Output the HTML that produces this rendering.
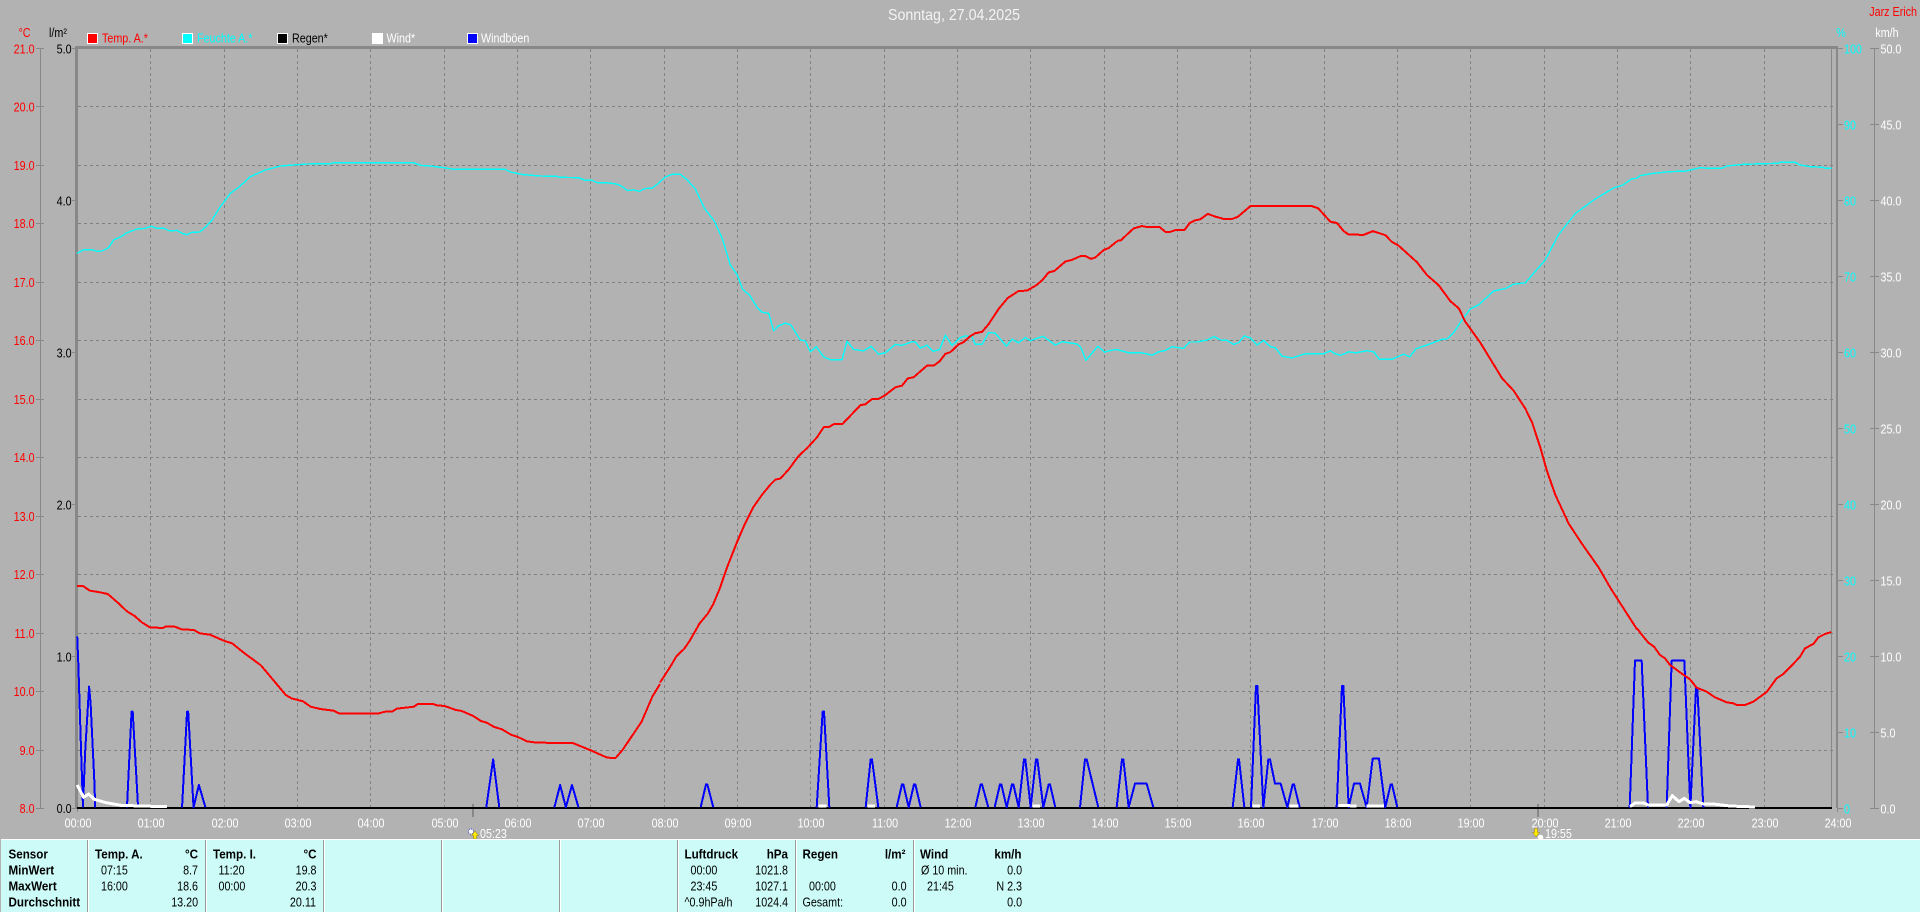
<!DOCTYPE html>
<html lang="de">
<head>
<meta charset="utf-8">
<title>Sonntag, 27.04.2025</title>
<style>
html,body{margin:0;padding:0;background:#b2b2b2;width:1920px;height:912px;overflow:hidden}
svg{display:block}
text{font-family:"Liberation Sans",sans-serif;font-size:12.5px;transform-box:fill-box;transform:scaleX(.86)}
.l{transform-origin:0% 50%}
.e{text-anchor:end;transform-origin:100% 50%}
.m{text-anchor:middle;transform-origin:50% 50%}
.b{font-weight:bold;transform:scaleX(.93)}
.red{fill:#f00}.cy{fill:#0ff}.wh{fill:#fff}.bk{fill:#000}
polyline,path.c{fill:none;vector-effect:non-scaling-stroke;shape-rendering:crispEdges;stroke-linejoin:round}
.R polyline{stroke:#f00;stroke-width:2}
.C polyline{stroke:#0ff;stroke-width:1.4}
.B polyline{stroke:#00f;stroke-width:2}
.W polyline{stroke:#fff;stroke-width:3}
</style>
</head>
<body>
<svg width="1920" height="912" viewBox="0 0 1920 912" xmlns="http://www.w3.org/2000/svg">
<rect width="1920" height="912" fill="#b2b2b2"/>

<!-- grid -->
<path shape-rendering="crispEdges" fill="none" stroke="#808080" stroke-width="1" stroke-dasharray="3 3" d="M78 106.5H1836M78 165.5H1836M78 223.5H1836M78 282.5H1836M78 340.5H1836M78 399.5H1836M78 457.5H1836M78 516.5H1836M78 574.5H1836M78 633.5H1836M78 691.5H1836M78 750.5H1836"/>
<path shape-rendering="crispEdges" fill="none" stroke="#808080" stroke-width="1" stroke-dasharray="3 3" d="M150.5 49V807M224.5 49V807M297.5 49V807M370.5 49V807M444.5 49V807M517.5 49V807M590.5 49V807M664.5 49V807M737.5 49V807M810.5 49V807M884.5 49V807M957.5 49V807M1030.5 49V807M1104.5 49V807M1177.5 49V807M1250.5 49V807M1324.5 49V807M1397.5 49V807M1470.5 49V807M1544.5 49V807M1617.5 49V807M1690.5 49V807M1764.5 49V807"/>

<!-- frame -->
<g fill="#888" shape-rendering="crispEdges">
<rect x="76" y="46" width="1762" height="3"/>
<rect x="75" y="46" width="3" height="762"/>
<rect x="1836" y="46" width="2" height="762"/>
<rect x="1831" y="48" width="1" height="760"/>
<!-- left temp axis -->
<rect x="40" y="48" width="1" height="760"/>
<rect x="36" y="48" width="8" height="1"/><rect x="36" y="106" width="8" height="1"/><rect x="36" y="165" width="8" height="1"/><rect x="36" y="223" width="8" height="1"/><rect x="36" y="282" width="8" height="1"/><rect x="36" y="340" width="8" height="1"/><rect x="36" y="399" width="8" height="1"/><rect x="36" y="457" width="8" height="1"/><rect x="36" y="516" width="8" height="1"/><rect x="36" y="574" width="8" height="1"/><rect x="36" y="633" width="8" height="1"/><rect x="36" y="691" width="8" height="1"/><rect x="36" y="750" width="8" height="1"/><rect x="36" y="808" width="8" height="1"/>
<!-- l/m2 ticks -->
<rect x="72" y="48" width="5" height="1"/><rect x="72" y="200" width="5" height="1"/><rect x="72" y="352" width="5" height="1"/><rect x="72" y="504" width="5" height="1"/><rect x="72" y="656" width="5" height="1"/><rect x="72" y="808" width="5" height="1"/>
<!-- right axes -->
<rect x="1874" y="48" width="1" height="760"/>
<rect x="1838" y="48" width="5" height="1"/><rect x="1838" y="124" width="5" height="1"/><rect x="1838" y="200" width="5" height="1"/><rect x="1838" y="276" width="5" height="1"/><rect x="1838" y="352" width="5" height="1"/><rect x="1838" y="428" width="5" height="1"/><rect x="1838" y="504" width="5" height="1"/><rect x="1838" y="580" width="5" height="1"/><rect x="1838" y="656" width="5" height="1"/><rect x="1838" y="732" width="5" height="1"/><rect x="1838" y="808" width="5" height="1"/>
<rect x="1870" y="48" width="9" height="1"/><rect x="1870" y="124" width="9" height="1"/><rect x="1870" y="200" width="9" height="1"/><rect x="1870" y="276" width="9" height="1"/><rect x="1870" y="352" width="9" height="1"/><rect x="1870" y="428" width="9" height="1"/><rect x="1870" y="504" width="9" height="1"/><rect x="1870" y="580" width="9" height="1"/><rect x="1870" y="656" width="9" height="1"/><rect x="1870" y="732" width="9" height="1"/><rect x="1870" y="808" width="9" height="1"/>
<!-- time ticks -->
<rect x="77" y="808" width="1" height="4"/><rect x="1837" y="808" width="1" height="4"/>
<!-- sun ticks -->
<rect x="472" y="804" width="2" height="13"/><rect x="1537" y="804" width="2" height="13"/>
</g>

<!-- baseline -->
<rect x="77" y="807" width="1755" height="2" fill="#000" shape-rendering="crispEdges"/>

<!-- humidity -->
<g class="C">
<g transform="translate(77,150) scale(.33333)"><polyline points="0,310 20,299 45,299 60,304 75,303 95,293 110,270 135,258 150,248 180,237 205,235 222,229 240,235 262,235 278,243 300,241 315,250 330,254 345,247 368,246 385,232 405,210 430,170 460,130 490,108 520,80 565,60 610,48 650,45 690,42 760,41 770,38 1010,38 1030,46 1060,48 1100,53 1130,58 1285,58 1300,66 1340,74 1390,78 1440,79 1450,82 1505,83 1525,91 1545,91 1560,98"/></g>
<g transform="translate(597,150) scale(.33333,.33806)"><polyline points="0,97 30,97 55,100 70,105 92,120 110,118 127,122 145,114 165,113 180,102 205,80 225,72 250,72 270,88 295,115 322,172 352,210 375,260 400,340 420,368 437,412 458,430 480,465 495,480 515,483 530,535 545,520 565,512 582,518 610,562 625,565 640,597 658,582 680,612 700,620 735,620 750,566 770,590 800,594 822,581 845,604 865,600 895,575 915,578 945,567 955,568 970,586 990,577 1008,596 1028,590 1045,548 1065,578 1090,555 1105,550 1125,552 1135,575 1155,575 1175,540 1195,542 1228,580 1245,560 1265,570 1285,555 1300,564 1338,551 1375,577 1395,567 1440,574 1452,585 1467,622 1503,580 1522,598 1545,592 1560,590"/></g>
<g transform="translate(1117,150) scale(.33333,.33806)"><polyline points="0,590 35,600 75,600 105,607 125,597 145,593 165,582 200,587 218,568 240,568 270,562 292,552 310,562 330,563 350,575 365,570 382,550 400,556 420,577 440,563 460,582 475,585 495,610 525,615 565,603 620,603 640,594 655,603 672,607 695,597 715,600 750,594 770,597 787,619 825,619 860,604 878,612 897,588 935,575 975,560 990,559 1010,540 1030,510 1060,470 1085,458 1130,417 1165,410 1190,397 1225,393 1285,325 1325,250 1375,188 1430,148 1490,112 1515,105 1545,85 1560,84"/></g>
<g transform="translate(1500,0) scale(.33333)"><polyline points="411,535 420,527 460,520 510,515 560,513 600,503 625,505 665,505 680,498 730,493 790,491 835,490 840,487 885,487 900,495 930,500 970,502 975,505 994,505"/></g>
</g>

<!-- gusts -->
<g class="B">
<g transform="translate(60,570) scale(.38265,.33333)">
<polyline points="45,200 48,285 55,540 60,710 66,540 76,350 80,400 90,640 92,712"/>
<polyline points="175,712 187,425 190,425 204,712"/>
<polyline points="319,712 332,425 335,425 349,712 363,645 380,712"/>
<polyline points="1114,712 1132,568 1148,712"/>
<polyline points="1292,712 1307,645 1322,712 1338,645 1355,712"/>
</g>
<g transform="translate(640,680) scale(.33333)">
<polyline points="182,382 198,313 202,313 220,382"/>
<polyline points="530,382 548,95 552,95 568,382"/>
<polyline points="677,382 692,238 696,238 715,382"/>
<polyline points="770,382 786,313 790,313 806,382 822,313 826,313 842,382"/>
<polyline points="1006,382 1022,313 1026,313 1045,382"/>
<polyline points="1064,382 1080,313 1084,313 1100,382 1116,313 1120,313 1136,382 1152,238 1156,238 1172,382 1188,238 1192,238 1210,382 1226,313 1230,313 1246,382"/>
<polyline points="1320,382 1335,238 1340,238 1375,382"/>
<polyline points="1430,382 1446,238 1450,238 1466,382 1485,311 1520,311 1540,382"/>
</g>
<g transform="translate(1160,680) scale(.33333)">
<polyline points="218,382 234,238 237,238 253,382"/>
<polyline points="273,382 288,18 292,18 310,382 325,238 330,238 345,311 362,311 382,382 398,313 402,313 419,382"/>
<polyline points="530,382 546,18 550,18 566,382 582,311 600,311 620,382 638,236 657,236 676,382 692,313 696,313 712,382"/>
</g>
<g transform="translate(1500,620) scale(.33333)">
<polyline points="389,563 405,122 425,122 444,563"/>
<polyline points="500,563 515,122 553,122 571,563 588,205 592,205 610,563"/>
</g>
</g>

<!-- wind -->
<g class="W">
<g transform="translate(60,570) scale(.38265,.33333)"><polyline points="45,645 62,682 75,672 90,688 120,698 160,706 210,708 280,710"/></g>
<g transform="translate(1500,620) scale(.33333)"><polyline points="390,560 405,549 430,549 445,555 500,555 517,527 537,545 553,535 570,548 588,545 610,552 640,552 690,558 765,561"/></g>
<g transform="translate(640,680) scale(.33333)"><polyline points="535,378 560,378"/><polyline points="682,378 705,378"/><polyline points="1178,378 1200,378"/></g>
<g transform="translate(1160,680) scale(.33333)"><polyline points="278,378 300,378"/><polyline points="388,378 415,378"/><polyline points="535,376 590,378"/><polyline points="620,378 672,378"/></g>
</g>

<!-- temperature -->
<g class="R">
<g transform="translate(60,570) scale(.38265,.33333)"><polyline points="45,48 60,48 78,62 100,66 125,72 150,97 175,124 195,138 215,158 235,172 268,174 275,170 300,170 318,178 350,180 365,190 392,194 430,213 450,220 480,248 525,286 550,320 590,375 605,385 635,394 655,410 680,417 715,422 730,431 830,431 850,425 868,425 880,416 925,410 935,402 975,402 985,406 1005,408 1035,420 1050,423 1080,438 1100,453 1115,458 1135,471 1155,478 1180,495 1195,500 1220,514 1245,518 1340,519 1385,540 1430,563 1452,564 1470,540 1520,455 1548,380 1568,342"/></g>
<g transform="translate(597,150) scale(.33333,.33806)"><polyline points="189,1575 198,1562 222,1525 238,1498 262,1475 278,1452 308,1400 332,1372 348,1345 368,1298 390,1235 420,1160 445,1103 470,1055 495,1020 520,990 535,975 550,972 575,945 605,905 630,882 660,850 680,820 695,820 710,811 736,811 790,755 805,752 825,737 845,736 862,727 895,702 915,697 932,676 950,672 990,638 1010,638 1028,625 1045,603 1060,598 1085,575 1100,568 1118,552 1135,542 1155,538 1175,515 1205,470 1232,438 1265,417 1290,416 1318,400 1335,386 1355,362 1372,358 1405,330 1425,325 1450,314 1465,314 1482,322 1495,318 1520,296 1535,290 1560,270"/></g>
<g transform="translate(1117,150) scale(.33333,.33806)"><polyline points="0,269 12,267 30,250 50,232 75,225 90,228 128,228 145,242 160,242 175,237 203,236 218,216 235,208 250,205 272,189 295,197 320,204 345,204 362,198 400,166 585,166 603,172 640,212 660,216 680,240 695,250 740,251 768,240 805,252 825,272 845,283 900,332 930,370 965,400 1000,447 1025,468 1045,508 1090,570 1155,675 1190,712 1225,765 1245,805 1270,880 1290,950 1315,1020 1355,1105 1395,1165 1445,1235 1480,1295 1560,1418"/></g>
<g transform="translate(1500,260) scale(.33333)"><polyline points="411,1105 430,1130 445,1148 462,1160 480,1185 495,1195 510,1215 540,1237 570,1258"/></g>
<g transform="translate(1500,620) scale(.33333)"><polyline points="570,178 590,203 620,215 645,232 680,247 700,250 710,255 735,255 760,245 800,216 830,175 850,162 875,137 900,110 915,85 940,72 955,52 975,42 994,36"/></g>
</g>

<!-- title -->
<text x="954" y="20" class="m wh" style="font-size:16px;transform:scaleX(.89);opacity:.85">Sonntag, 27.04.2025</text>
<text x="1917" y="16" class="e red">Jarz Erich</text>

<!-- headers -->
<text x="24.5" y="37" class="m red">°C</text>
<text x="58" y="37" class="m bk">l/m²</text>
<text x="1841" y="37" class="m cy">%</text>
<text x="1887" y="37" class="m wh">km/h</text>

<!-- legend -->
<g shape-rendering="crispEdges" stroke="#fff" stroke-width="1">
<rect x="87.5" y="33.5" width="10" height="10" fill="#f00"/>
<rect x="182.5" y="33.5" width="10" height="10" fill="#0ff"/>
<rect x="277.5" y="33.5" width="10" height="10" fill="#000"/>
<rect x="372.5" y="33.5" width="10" height="10" fill="#fff"/>
<rect x="467.5" y="33.5" width="10" height="10" fill="#00f"/>
</g>
<text x="102" y="42.5" class="l red">Temp. A.*</text>
<text x="197" y="42.5" class="l cy">Feuchte A.*</text>
<text x="292" y="42.5" class="l bk">Regen*</text>
<text x="386.5" y="42.5" class="l wh">Wind*</text>
<text x="481" y="42.5" class="l wh">Windböen</text>

<!-- temp axis labels -->
<g class="red">
<text x="34.5" y="53.5" class="e">21.0</text>
<text x="34.5" y="111.5" class="e">20.0</text>
<text x="34.5" y="170" class="e">19.0</text>
<text x="34.5" y="228" class="e">18.0</text>
<text x="34.5" y="287" class="e">17.0</text>
<text x="34.5" y="345" class="e">16.0</text>
<text x="34.5" y="404" class="e">15.0</text>
<text x="34.5" y="462" class="e">14.0</text>
<text x="34.5" y="521" class="e">13.0</text>
<text x="34.5" y="579" class="e">12.0</text>
<text x="34.5" y="638" class="e">11.0</text>
<text x="34.5" y="696" class="e">10.0</text>
<text x="34.5" y="755" class="e">9.0</text>
<text x="34.5" y="813" class="e">8.0</text>
</g>
<g class="bk">
<text x="71.5" y="53.5" class="e">5.0</text>
<text x="71.5" y="205.5" class="e">4.0</text>
<text x="71.5" y="357.5" class="e">3.0</text>
<text x="71.5" y="509.5" class="e">2.0</text>
<text x="71.5" y="661.5" class="e">1.0</text>
<text x="71.5" y="813" class="e">0.0</text>
</g>
<g class="cy">
<text x="1844" y="53.5" class="l">100</text>
<text x="1844" y="129.5" class="l">90</text>
<text x="1844" y="205.5" class="l">80</text>
<text x="1844" y="281.5" class="l">70</text>
<text x="1844" y="357.5" class="l">60</text>
<text x="1844" y="433.5" class="l">50</text>
<text x="1844" y="509.5" class="l">40</text>
<text x="1844" y="585.5" class="l">30</text>
<text x="1844" y="661.5" class="l">20</text>
<text x="1844" y="737.5" class="l">10</text>
<text x="1844" y="813.5" class="l">0</text>
</g>
<g class="wh">
<text x="1880.5" y="53.5" class="l">50.0</text>
<text x="1880.5" y="129.5" class="l">45.0</text>
<text x="1880.5" y="205.5" class="l">40.0</text>
<text x="1880.5" y="281.5" class="l">35.0</text>
<text x="1880.5" y="357.5" class="l">30.0</text>
<text x="1880.5" y="433.5" class="l">25.0</text>
<text x="1880.5" y="509.5" class="l">20.0</text>
<text x="1880.5" y="585.5" class="l">15.0</text>
<text x="1880.5" y="661.5" class="l">10.0</text>
<text x="1880.5" y="737.5" class="l">5.0</text>
<text x="1880.5" y="813.5" class="l">0.0</text>
</g>

<!-- time labels -->
<g class="wh">
<text x="78" y="827.5" class="m">00:00</text>
<text x="151" y="827.5" class="m">01:00</text>
<text x="225" y="827.5" class="m">02:00</text>
<text x="298" y="827.5" class="m">03:00</text>
<text x="371" y="827.5" class="m">04:00</text>
<text x="445" y="827.5" class="m">05:00</text>
<text x="518" y="827.5" class="m">06:00</text>
<text x="591" y="827.5" class="m">07:00</text>
<text x="665" y="827.5" class="m">08:00</text>
<text x="738" y="827.5" class="m">09:00</text>
<text x="811" y="827.5" class="m">10:00</text>
<text x="885" y="827.5" class="m">11:00</text>
<text x="958" y="827.5" class="m">12:00</text>
<text x="1031" y="827.5" class="m">13:00</text>
<text x="1105" y="827.5" class="m">14:00</text>
<text x="1178" y="827.5" class="m">15:00</text>
<text x="1251" y="827.5" class="m">16:00</text>
<text x="1325" y="827.5" class="m">17:00</text>
<text x="1398" y="827.5" class="m">18:00</text>
<text x="1471" y="827.5" class="m">19:00</text>
<text x="1545" y="827.5" class="m">20:00</text>
<text x="1618" y="827.5" class="m">21:00</text>
<text x="1691" y="827.5" class="m">22:00</text>
<text x="1765" y="827.5" class="m">23:00</text>
<text x="1838" y="827.5" class="m">24:00</text>
<text x="480" y="838" class="l">05:23</text>
<text x="1545" y="838" class="l">19:55</text>
</g>

<!-- sun icons -->
<circle cx="471" cy="831.5" r="2.6" fill="#fff" stroke="#3040c0" stroke-width="1" stroke-dasharray="1 1"/>
<path d="M475 831l3.500 4.500h-2v3.500h-3v-3.500h-2z" fill="#ffea00" stroke="#806000" stroke-width=".4"/>
<path d="M1536 837l-3.500-4.500h2v-4h3v4h2z" fill="#ffea00" stroke="#806000" stroke-width=".4"/>
<circle cx="1540.500" cy="837.500" r="2.800" fill="#fff"/>

<!-- info panel -->
<rect x="0" y="838" width="1920" height="74" fill="#b2b2b2" style="display:none"/>
<rect x="1" y="839" width="1919" height="1" fill="#fff" shape-rendering="crispEdges"/>
<rect x="1" y="840" width="1919" height="72" fill="#ccfbf8" shape-rendering="crispEdges"/>
<g shape-rendering="crispEdges">
<rect x="87" y="840" width="1" height="72" fill="#9a9a9a"/><rect x="88" y="840" width="1" height="72" fill="#fff"/>
<rect x="205" y="840" width="1" height="72" fill="#9a9a9a"/><rect x="206" y="840" width="1" height="72" fill="#fff"/>
<rect x="323" y="840" width="1" height="72" fill="#9a9a9a"/><rect x="324" y="840" width="1" height="72" fill="#fff"/>
<rect x="441" y="840" width="1" height="72" fill="#9a9a9a"/><rect x="442" y="840" width="1" height="72" fill="#fff"/>
<rect x="677" y="840" width="1" height="72" fill="#9a9a9a"/><rect x="678" y="840" width="1" height="72" fill="#fff"/>
<rect x="559" y="840" width="1" height="72" fill="#9a9a9a"/><rect x="560" y="840" width="1" height="72" fill="#fff"/>
<rect x="795" y="840" width="1" height="72" fill="#9a9a9a"/><rect x="796" y="840" width="1" height="72" fill="#fff"/>
<rect x="913" y="840" width="1" height="72" fill="#9a9a9a"/><rect x="914" y="840" width="1" height="72" fill="#fff"/>
</g>
<g class="bk">
<text x="8.500" y="858.500" class="l b">Sensor</text>
<text x="8.500" y="874.500" class="l b">MinWert</text>
<text x="8.500" y="890.500" class="l b">MaxWert</text>
<text x="8.500" y="906.500" class="l b">Durchschnitt</text>

<text x="95" y="858.500" class="l b">Temp. A.</text>
<text x="198" y="858.500" class="e b">°C</text>
<text x="101" y="874.500" class="l">07:15</text>
<text x="198" y="874.500" class="e">8.7</text>
<text x="101" y="890.500" class="l">16:00</text>
<text x="198" y="890.500" class="e">18.6</text>
<text x="198" y="906.500" class="e">13.20</text>

<text x="213" y="858.500" class="l b">Temp. I.</text>
<text x="316.500" y="858.500" class="e b">°C</text>
<text x="218.500" y="874.500" class="l">11:20</text>
<text x="316.500" y="874.500" class="e">19.8</text>
<text x="218.500" y="890.500" class="l">00:00</text>
<text x="316.500" y="890.500" class="e">20.3</text>
<text x="316" y="906.500" class="e">20.11</text>

<text x="684.500" y="858.500" class="l b">Luftdruck</text>
<text x="788" y="858.500" class="e b">hPa</text>
<text x="690.500" y="874.500" class="l">00:00</text>
<text x="788" y="874.500" class="e">1021.8</text>
<text x="690.500" y="890.500" class="l">23:45</text>
<text x="788" y="890.500" class="e">1027.1</text>
<text x="684.500" y="906.500" class="l">^0.9hPa/h</text>
<text x="788" y="906.500" class="e">1024.4</text>

<text x="802.500" y="858.500" class="l b">Regen</text>
<text x="905.500" y="858.500" class="e b">l/m²</text>
<text x="809" y="890.500" class="l">00:00</text>
<text x="906.500" y="890.500" class="e">0.0</text>
<text x="802.500" y="906.500" class="l">Gesamt:</text>
<text x="906.500" y="906.500" class="e">0.0</text>

<text x="920" y="858.500" class="l b">Wind</text>
<text x="1021.500" y="858.500" class="e b">km/h</text>
<text x="921" y="874.500" class="l">Ø 10 min.</text>
<text x="1022" y="874.500" class="e">0.0</text>
<text x="927" y="890.500" class="l">21:45</text>
<text x="1022" y="890.500" class="e">N 2.3</text>
<text x="1022" y="906.500" class="e">0.0</text>
</g>
</svg>
</body>
</html>
